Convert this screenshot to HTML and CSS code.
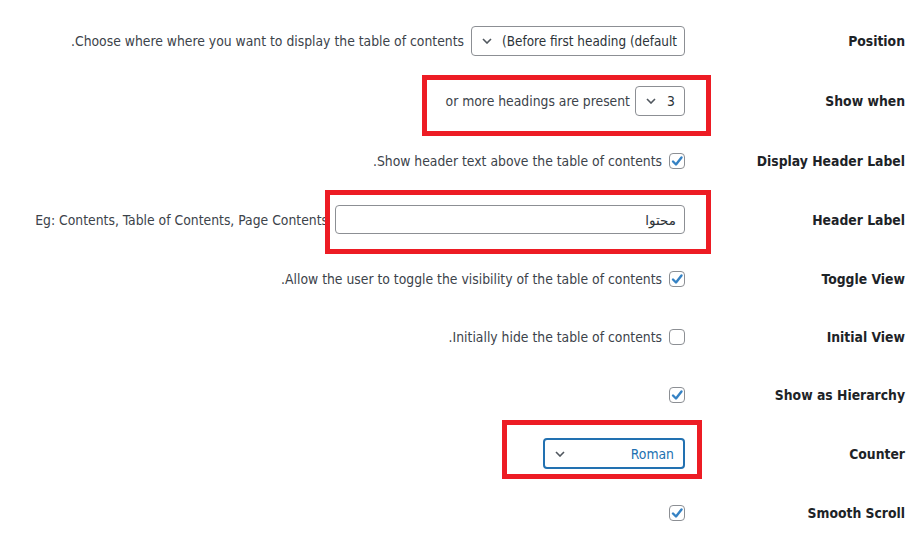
FILE: index.html
```html
<!DOCTYPE html>
<html lang="fa" dir="rtl">

<head>
    <meta charset="UTF-8">
    <meta name="viewport" content="width=device-width, initial-scale=1.0">
    <title>Table of contents settings</title>
    <link rel="stylesheet" href="styles.css">
</head>

<body>

    <form class="settings">
        <div class="row row--tall">
            <div class="row__label">Position</div>
            <div class="row__field">
                <span class="select select--position">
                    <span class="select__value">Before first heading (default<span dir="rtl">)</span></span>
                    <svg class="chevron" width="10" height="6" viewBox="0 0 10 6"><polyline points="1,1 5,5 9,1" /></svg>
                </span>
                <span class="desc">Choose where where you want to display the table of contents.</span>
            </div>
        </div>

        <div class="row row--tall">
            <div class="row__label">Show when</div>
            <div class="row__field">
                <span class="mark mark--one">
                    <span class="select select--count">
                        <span class="select__value">3</span>
                        <svg class="chevron" width="10" height="6" viewBox="0 0 10 6"><polyline points="1,1 5,5 9,1" /></svg>
                    </span>
                    <span class="desc">or more headings are present</span>
                </span>
            </div>
        </div>

        <div class="row">
            <div class="row__label">Display Header Label</div>
            <div class="row__field">
                <span class="check is-checked"><svg width="14" height="14" viewBox="0 0 14 14"><polyline points="3,7.5 6,10.5 11.5,3.5" /></svg></span>
                <span class="desc">Show header text above the table of contents.</span>
            </div>
        </div>

        <div class="row">
            <div class="row__label">Header Label</div>
            <div class="row__field">
                <span class="mark mark--two">
                    <span class="input">محتوا</span>
                </span>
                <span class="desc desc--under">Eg: Contents, Table of Contents, Page Contents</span>
            </div>
        </div>

        <div class="row">
            <div class="row__label">Toggle View</div>
            <div class="row__field">
                <span class="check is-checked"><svg width="14" height="14" viewBox="0 0 14 14"><polyline points="3,7.5 6,10.5 11.5,3.5" /></svg></span>
                <span class="desc">Allow the user to toggle the visibility of the table of contents.</span>
            </div>
        </div>

        <div class="row row--short">
            <div class="row__label">Initial View</div>
            <div class="row__field">
                <span class="check"></span>
                <span class="desc">Initially hide the table of contents.</span>
            </div>
        </div>

        <div class="row row--short">
            <div class="row__label">Show as Hierarchy</div>
            <div class="row__field">
                <span class="check is-checked"><svg width="14" height="14" viewBox="0 0 14 14"><polyline points="3,7.5 6,10.5 11.5,3.5" /></svg></span>
            </div>
        </div>

        <div class="row">
            <div class="row__label">Counter</div>
            <div class="row__field">
                <span class="mark mark--three">
                    <span class="select select--counter is-focused">
                        <span class="select__value">Roman</span>
                        <svg class="chevron" width="10" height="6" viewBox="0 0 10 6"><polyline points="1,1 5,5 9,1" /></svg>
                    </span>
                </span>
            </div>
        </div>

        <div class="row">
            <div class="row__label">Smooth Scroll</div>
            <div class="row__field">
                <span class="check is-checked"><svg width="14" height="14" viewBox="0 0 14 14"><polyline points="3,7.5 6,10.5 11.5,3.5" /></svg></span>
            </div>
        </div>
    </form>

</body>

</html>
```

FILE: styles.css
```css
* {
    box-sizing: border-box;
}

body {
    margin: 0;
    background: #fff;
    color: #3c434a;
    font-family: "DejaVu Sans Condensed", "DejaVu Sans", Tahoma, sans-serif;
    font-size: 13.8px;
    overflow: hidden;
}

.settings {
    padding-top: 11px;
    margin-right: 12px;
}

.row {
    display: flex;
    align-items: center;
    height: 59px;
}

.row--tall {
    height: 60px;
}

.row--short {
    height: 58px;
}

.row__label {
    flex: 0 0 210px;
    padding-left: 10px;
    color: #1d2327;
    font-weight: bold;
}

.row__field {
    flex: 1;
    display: flex;
    align-items: center;
    gap: 7px;
    padding-right: 10px;
    white-space: nowrap;
}

.desc {
    color: #3c434a;
}

.desc--under {
    position: relative;
    z-index: 0;
}

/* fake controls */
.select {
    display: flex;
    align-items: center;
    height: 30px;
    padding: 0 9px 0 10px;
    border: 1px solid #8c8f94;
    border-radius: 4px;
    color: #2c3338;
    background: #fff;
}

.select__value {
    white-space: nowrap;
}

.chevron {
    flex-shrink: 0;
    margin-inline-start: auto;
    fill: none;
    stroke: #50575e;
    stroke-width: 1.6;
}

.select--position {
    width: 214px;
    gap: 6px;
    padding-right: 7px;
    font-size: 13.4px;
}

.select--count {
    width: 50px;
}

.select--counter {
    width: 142px;
    height: 31px;
}

.select.is-focused {
    border: 2px solid #2271b1;
    color: #2271b1;
}

.input {
    display: flex;
    align-items: center;
    width: 350px;
    height: 29px;
    padding: 0 8px;
    border: 1px solid #8c8f94;
    border-radius: 4px;
    color: #2c3338;
    font-family: "DejaVu Sans", sans-serif;
    font-size: 13.5px;
}

.check {
    display: flex;
    align-items: center;
    justify-content: center;
    width: 16px;
    height: 16px;
    border: 1px solid #8c8f94;
    border-radius: 4px;
    background: #fff;
}

.check svg {
    fill: none;
    stroke: #3582c4;
    stroke-width: 2.4;
    stroke-linecap: round;
    stroke-linejoin: round;
}

/* red annotation frames */
.mark {
    position: relative;
    display: flex;
    align-items: center;
    gap: 5px;
}

.mark::after {
    content: "";
    position: absolute;
    border: 5px solid #ed1c24;
    z-index: 2;
}

.mark--one::after {
    top: -11px;
    right: -26px;
    bottom: -20px;
    left: -24px;
}

.mark--two::after {
    top: -15px;
    right: -26px;
    bottom: -20px;
    left: -10px;
}

.mark--three::after {
    top: -18px;
    right: -17px;
    bottom: -10px;
    left: -41px;
}
```
